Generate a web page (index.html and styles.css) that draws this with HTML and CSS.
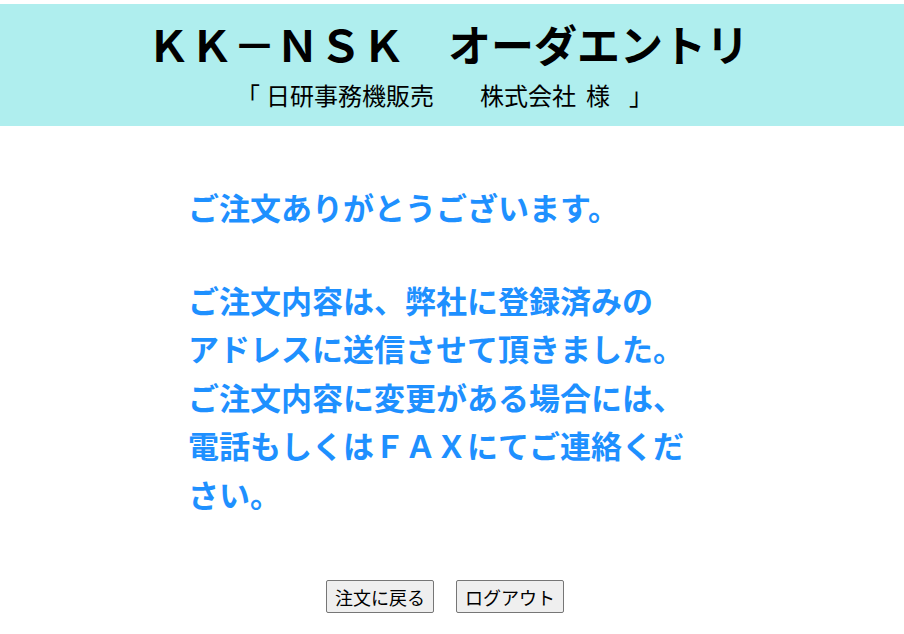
FILE: index.html
```html
<!DOCTYPE html>
<html lang="ja">
<head>
<meta charset="utf-8">
<title>KK-NSK オーダエントリ</title>
<link rel="stylesheet" href="styles.css">
</head>
<body>
<header class="header">
  <h1 class="title">ＫＫ－ＮＳＫ　オーダエントリ</h1>
  <p class="customer">「<span class="sp-open"></span>日研事務機販売<span class="sp-wide"></span>株式会社<span class="sp-name"></span>様<span class="sp-close"></span>」</p>
</header>
<main class="content">
  <div class="message">
    <p class="thanks">ご注文ありがとうございます。</p>
    <p class="notice">ご注文内容は、弊社に登録済みの<br>アドレスに送信させて頂きました。<br>ご注文内容に変更がある場合には、<br>電話もしくはＦＡＸにてご連絡ください。</p>
  </div>
  <div class="actions">
    <button class="btn" type="button">注文に戻る</button>
    <button class="btn" type="button">ログアウト</button>
  </div>
</main>
</body>
</html>
```
FILE: styles.css
```css
html, body {
  margin: 0;
  padding: 0;
  background: #ffffff;
}
body {
  font-family: "Noto Sans CJK JP", "Noto Sans", sans-serif;
  color: #000;
}
.header {
  margin-top: 4px;
  background: #afeeee;
  height: 122px;
  box-sizing: border-box;
  padding-top: 14px;
  text-align: center;
}
.title {
  margin: 0;
  padding-right: 8px;
  font-size: 43px;
  line-height: 50px;
  font-weight: bold;
  letter-spacing: 0;
}
.customer {
  margin: 12px 0 0;
  padding-right: 15px;
  font-size: 24px;
  line-height: 30px;
  font-weight: normal;
}
.customer span {
  display: inline-block;
}
.sp-open {
  width: 6px;
}
.sp-wide {
  width: 46px;
}
.sp-name {
  width: 10px;
}
.sp-close {
  width: 19px;
}
.content {
  padding-top: 57px;
}
.message {
  width: 520px;
  padding-right: 8px;
  margin: 0 auto;
  color: #1e90ff;
  font-weight: bold;
  font-size: 31px;
  line-height: 48.5px;
}
.message p {
  margin: 0;
}
.notice {
  margin-top: 44px !important;
}
.actions {
  margin-top: 62px;
  display: flex;
  justify-content: center;
  gap: 22px;
  padding-right: 14px;
}
.btn {
  font-family: "Noto Sans CJK JP", sans-serif;
  font-size: 18px;
  height: 33px;
  width: 108px;
  padding: 0;
  background: #efefef;
  border: 1px solid #767676;
  border-radius: 2px;
  color: #000;
  line-height: 1;
}
```
